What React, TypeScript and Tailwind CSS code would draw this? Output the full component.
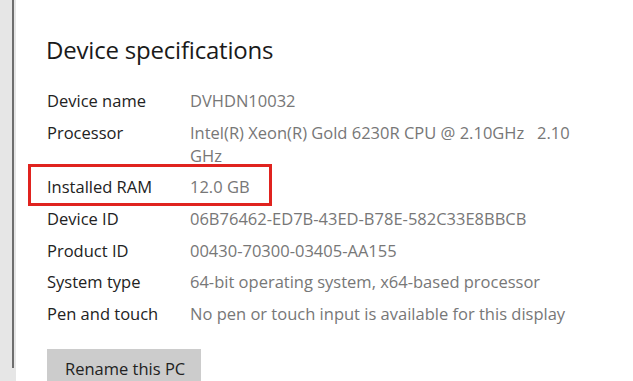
import React from 'react';

const specs: { label: string; value: React.ReactNode; highlight?: boolean }[] = [
  { label: 'Device name', value: 'DVHDN10032' },
  {
    label: 'Processor',
    value: (
      <>
        <span className="whitespace-pre">Intel(R) Xeon(R) Gold 6230R CPU @ 2.10GHz   2.10</span>
        <br />
        GHz
      </>
    ),
  },
  { label: 'Installed RAM', value: '12.0 GB', highlight: true },
  { label: 'Device ID', value: '06B76462-ED7B-43ED-B78E-582C33E8BBCB' },
  { label: 'Product ID', value: '00430-70300-03405-AA155' },
  { label: 'System type', value: '64-bit operating system, x64-based processor' },
  { label: 'Pen and touch', value: 'No pen or touch input is available for this display' },
];

export default function App() {
  return (
    <div className="flex w-[633px] h-[381px] overflow-hidden bg-white font-['Open_Sans',sans-serif]">
      {/* Left rail */}
      <div className="flex w-4 shrink-0 bg-[#e6e6e6]">
        <div className="ml-3 w-[2px] h-[368px] bg-[#6e6e6e]" />
      </div>

      <div className="flex-1 pl-[31px] pt-[34px]">
        <h1 className="text-[24px] leading-[32px] text-[#1a1a1a] -ml-px tracking-[-0.2px]">Device specifications</h1>

        <div className="mt-[19px] flex flex-col">
          {specs.map((s) => (
            <div key={s.label} className="relative flex text-[16.5px] leading-[23px] py-[4.3px]">
              {s.highlight && (
                <span className="absolute -left-[19px] -top-[7px] w-[244px] h-[42px] border-[3px] border-[#e0231f]" />
              )}
              <div className="w-[143px] shrink-0 text-[#222]">{s.label}</div>
              <div className="text-[#777]">{s.value}</div>
            </div>
          ))}
        </div>

        <button className="mt-[20px] h-[40px] w-[154px] bg-[#cccccc] text-left pl-[18px] text-[16.5px] text-[#222]">
          Rename this PC
        </button>
      </div>
    </div>
  );
}
